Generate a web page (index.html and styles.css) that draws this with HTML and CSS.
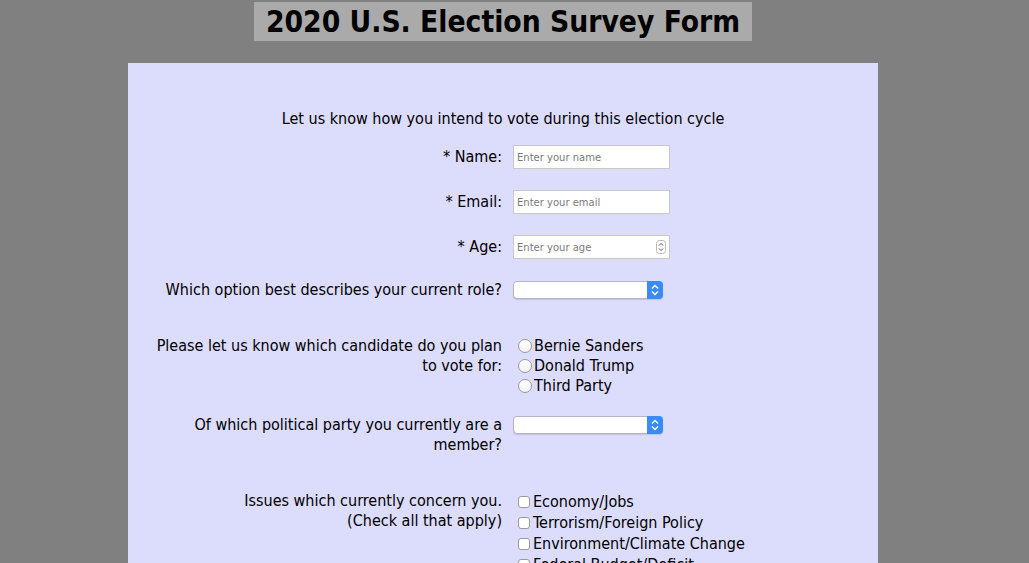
FILE: index.html
```html
<!DOCTYPE html>
<html lang="en">
<head>
<meta charset="utf-8">
<title>2020 U.S. Election Survey Form</title>
<link rel="stylesheet" href="styles.css">
</head>
<body>
<div class="page">
  <header class="header">
    <h1 class="title">2020 U.S. Election Survey Form</h1>
  </header>
  <form class="survey">
    <p class="intro">Let us know how you intend to vote during this election cycle</p>

    <div class="row row-input">
      <label class="label" for="name">* Name:</label>
      <div class="field"><input class="text-input" id="name" type="text" placeholder="Enter your name"></div>
    </div>

    <div class="row row-input">
      <label class="label" for="email">* Email:</label>
      <div class="field"><input class="text-input" id="email" type="text" placeholder="Enter your email"></div>
    </div>

    <div class="row row-input">
      <label class="label" for="age">* Age:</label>
      <div class="field">
        <span class="number-wrap">
          <input class="text-input" id="age" type="text" placeholder="Enter your age">
          <svg class="spinner" width="10" height="14" viewBox="0 0 10 14"><rect x="0.5" y="0.5" width="9" height="13" rx="3" fill="#fff" stroke="#b9b9b9"/><path d="M3 5.5 L5 3.5 L7 5.5 M3 8.5 L5 10.5 L7 8.5" fill="none" stroke="#555" stroke-width="1"/></svg>
        </span>
      </div>
    </div>

    <div class="row row-select row-role">
      <label class="label" for="role">Which option best describes your current role?</label>
      <div class="field">
        <span class="select-wrap">
          <select class="select" id="role"><option></option></select>
          <svg class="select-arrow" width="16" height="18" viewBox="0 0 16 18"><path d="M0 0 H12 A4 4 0 0 1 16 4 V14 A4 4 0 0 1 12 18 H0 Z" fill="#3a8bfa"/><path d="M5 7.5 L8 4.5 L11 7.5 M5 10.5 L8 13.5 L11 10.5" fill="none" stroke="#fff" stroke-width="1.4"/></svg>
        </span>
      </div>
    </div>

    <div class="row row-choices row-candidate">
      <div class="label">Please let us know which candidate do you plan to vote for:</div>
      <div class="field options radios">
        <label class="option"><span class="radio"></span>Bernie Sanders</label>
        <label class="option"><span class="radio"></span>Donald Trump</label>
        <label class="option"><span class="radio"></span>Third Party</label>
      </div>
    </div>

    <div class="row row-select row-party">
      <label class="label" for="party">Of which political party you currently are a member?</label>
      <div class="field">
        <span class="select-wrap">
          <select class="select" id="party"><option></option></select>
          <svg class="select-arrow" width="16" height="18" viewBox="0 0 16 18"><path d="M0 0 H12 A4 4 0 0 1 16 4 V14 A4 4 0 0 1 12 18 H0 Z" fill="#3a8bfa"/><path d="M5 7.5 L8 4.5 L11 7.5 M5 10.5 L8 13.5 L11 10.5" fill="none" stroke="#fff" stroke-width="1.4"/></svg>
        </span>
      </div>
    </div>

    <div class="row row-choices row-issues">
      <div class="label">Issues which currently concern you.<br>(Check all that apply)</div>
      <div class="field options checks">
        <label class="option"><span class="check"></span>Economy/Jobs</label>
        <label class="option"><span class="check"></span>Terrorism/Foreign Policy</label>
        <label class="option"><span class="check"></span>Environment/Climate Change</label>
        <label class="option"><span class="check"></span>Federal Budget/Deficit</label>
      </div>
    </div>
  </form>
</div>
</body>
</html>
```
FILE: styles.css
```css
html, body {
  margin: 0;
  padding: 0;
  background: #808080;
  height: 100%;
  overflow: hidden;
}
body {
  font-family: "DejaVu Sans Condensed", "DejaVu Sans", sans-serif;
  color: #000;
}
.page {
  width: 750px;
  margin-left: 128px;
}
.header {
  display: flex;
  justify-content: center;
  padding-top: 2px;
  height: 63px;
  box-sizing: border-box;
}
.title {
  margin: 0;
  height: 39px;
  line-height: 39px;
  padding: 0 12px;
  background: #aaaaaa;
  font-size: 29.7px;
  font-weight: bold;
  white-space: nowrap;
}
.survey {
  background: #dcdcfc;
  padding-top: 46px;
  min-height: 600px;
}
.intro {
  margin: 0 0 16px;
  text-align: center;
  font-size: 16px;
  line-height: 20px;
}
.row {
  display: flex;
  align-items: flex-start;
  gap: 11px;
  font-size: 16px;
  line-height: 20px;
}
.label {
  width: 352px;
  margin-left: 22px;
  text-align: right;
  flex: none;
}
.field {
  flex: none;
}
.row-input {
  align-items: center;
  height: 24px;
  margin-bottom: 21px;
}
.row-role { margin-bottom: 36px; }
.row-candidate { margin-bottom: 19px; }
.row-party { margin-bottom: 36px; }

.text-input {
  box-sizing: border-box;
  width: 157px;
  height: 24px;
  margin: 0;
  padding: 0 3px;
  border: 1px solid #c8c8c8;
  background: #fff;
  font-family: "DejaVu Sans", sans-serif;
  font-size: 10px;
  outline: none;
}
.text-input::placeholder {
  color: #7a7a7a;
}
.number-wrap, .select-wrap {
  position: relative;
  display: inline-block;
  vertical-align: top;
}
.spinner {
  position: absolute;
  right: 4px;
  top: 5px;
}
.select-wrap {
  height: 18px;
  margin-top: 1px;
}
.select {
  display: block;
  -webkit-appearance: none;
  appearance: none;
  box-sizing: border-box;
  width: 150px;
  height: 18px;
  margin: 0;
  border: 1px solid #b4b4c8;
  border-radius: 4px;
  background: #fff;
  box-shadow: 0 1px 1px rgba(0,0,0,0.12);
}
.select-arrow {
  position: absolute;
  right: 0;
  top: 0;
}
.options {
  display: flex;
  flex-direction: column;
  padding-left: 5px;
}
.option {
  display: flex;
  align-items: center;
  white-space: nowrap;
}
.radios .option { height: 20px; }
.checks .option { height: 21px; }
.radio {
  box-sizing: border-box;
  width: 14px;
  height: 14px;
  border: 1px solid #9a9a9a;
  border-radius: 50%;
  background: linear-gradient(#ffffff, #f2f2f2);
  margin-right: 2px;
  flex: none;
}
.check {
  box-sizing: border-box;
  width: 12px;
  height: 12px;
  border: 1px solid #9a9a9a;
  border-radius: 3px;
  background: #fff;
  margin-right: 3px;
  flex: none;
}
```
